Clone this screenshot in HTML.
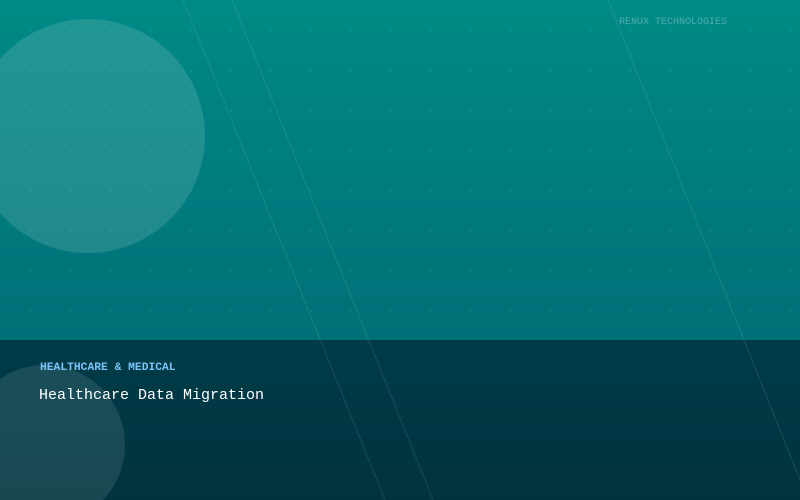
<!DOCTYPE html>
<html><head><style>
html,body{margin:0;padding:0}
body{width:800px;height:500px;position:relative;overflow:hidden;background:linear-gradient(180deg,#008a87 0%,#006470 100%);font-family:"Liberation Mono",monospace}
.dots{position:absolute;left:0;top:0;width:800px;height:340px;background-image:radial-gradient(circle,rgba(255,255,255,0.07) 1px,transparent 1.2px);background-size:40px 40px;background-position:11px 11px}
.c1{position:absolute;left:-29px;top:19px;width:234px;height:234px;border-radius:50%;background:rgba(255,255,255,0.13)}
.panel{position:absolute;left:0;top:340px;width:800px;height:160px;background:linear-gradient(180deg,#003c49,#00333f);overflow:hidden}
.c2{position:absolute;left:-35px;top:25px;width:160px;height:160px;border-radius:50%;background:rgba(255,255,255,0.1)}
.tag{position:absolute;left:40px;top:22px;font-size:11.3px;font-weight:bold;color:#7cc4f8}
.title{position:absolute;left:39px;top:47px;font-size:15px;color:#fff}
.brand{position:absolute;left:619px;top:17px;font-size:10px;color:rgba(255,255,255,0.3)}
svg{position:absolute;left:0;top:0}
</style></head><body>
<div class="dots"></div>
<div class="c1"></div>
<div class="brand">RENUX TECHNOLOGIES</div>
<div class="panel"><div class="c2"></div>
<div class="tag">HEALTHCARE &amp; MEDICAL</div>
<div class="title">Healthcare Data Migration</div></div>
<svg width="800" height="500"><g stroke="rgba(255,255,255,0.1)" stroke-width="1">
<line x1="183" y1="0" x2="385" y2="500"/>
<line x1="232" y1="0" x2="433" y2="500"/>
<line x1="608" y1="0" x2="808" y2="500"/>
</g></svg>
</body></html>
